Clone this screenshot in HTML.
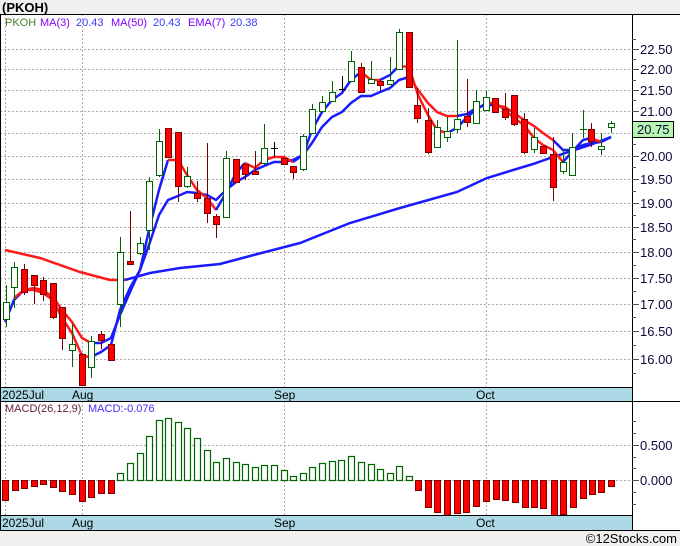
<!DOCTYPE html>
<html><head><meta charset="utf-8"><style>
html,body{margin:0;padding:0;background:#fff;}
svg{display:block;font-family:"Liberation Sans",sans-serif;}
</style></head><body>
<svg width="680" height="546" viewBox="0 0 680 546" xmlns="http://www.w3.org/2000/svg">
<rect x="0" y="0" width="680" height="546" fill="#fff"/>
<rect x="0" y="0" width="680" height="14" fill="#f0f0f0"/>
<text x="2" y="12" font-size="13" font-weight="bold" fill="#000">(PKOH)</text>
<rect x="0" y="530" width="680" height="16" fill="#f0f0f0"/>
<text x="677" y="543" font-size="13" fill="#000" text-anchor="end">©12Stocks.com</text>

<!-- grid -->
<g stroke="#aaa" stroke-width="1" stroke-dasharray="2,2">
<line x1="0" y1="49.5" x2="632" y2="49.5"/><line x1="0" y1="69.5" x2="632" y2="69.5"/>
<line x1="0" y1="90.5" x2="632" y2="90.5"/><line x1="0" y1="111.5" x2="632" y2="111.5"/>
<line x1="0" y1="133.5" x2="632" y2="133.5"/><line x1="0" y1="156.5" x2="632" y2="156.5"/>
<line x1="0" y1="179.5" x2="632" y2="179.5"/><line x1="0" y1="203.5" x2="632" y2="203.5"/>
<line x1="0" y1="227.5" x2="632" y2="227.5"/><line x1="0" y1="252.5" x2="632" y2="252.5"/>
<line x1="0" y1="278.5" x2="632" y2="278.5"/><line x1="0" y1="304.5" x2="632" y2="304.5"/>
<line x1="0" y1="331.5" x2="632" y2="331.5"/><line x1="0" y1="359.5" x2="632" y2="359.5"/>
<line x1="5.5" y1="14" x2="5.5" y2="387"/><line x1="82.5" y1="14" x2="82.5" y2="387"/>
<line x1="284.5" y1="14" x2="284.5" y2="387"/><line x1="486.5" y1="14" x2="486.5" y2="387"/>
<line x1="5.5" y1="401" x2="5.5" y2="515"/><line x1="82.5" y1="401" x2="82.5" y2="515"/>
<line x1="284.5" y1="401" x2="284.5" y2="515"/><line x1="486.5" y1="401" x2="486.5" y2="515"/>
<line x1="0" y1="445.5" x2="632" y2="445.5"/><line x1="0" y1="480.5" x2="632" y2="480.5"/>
</g>

<!-- legend -->
<text x="5" y="26" font-size="11" fill="#4b7d2a">PKOH</text>
<text x="40" y="26" font-size="11" fill="#7f00ff">MA(3)</text>
<text x="76" y="26" font-size="11" fill="#3a3aff">20.43</text>
<text x="111" y="26" font-size="11" fill="#7f00ff">MA(50)</text>
<text x="153" y="26" font-size="11" fill="#3a3aff">20.43</text>
<text x="188" y="26" font-size="11" fill="#7f00ff">EMA(7)</text>
<text x="230" y="26" font-size="11" fill="#3a3aff">20.38</text>

<!-- MA50 -->
<polyline fill="none" stroke="#ff1a1a" stroke-width="2.5" points="5,250 40,258 80,272 110,280 125,280"/>
<polyline fill="none" stroke="#1a1aff" stroke-width="2.5" points="125,280 150,273 180,268 220,264 250,256 300,243 350,223 400,208 457,192 487,178 533,164 553,157 590,145 611,137"/>

<!-- EMA7 -->
<polyline fill="none" stroke="#ff1a1a" stroke-width="2.5" points="24,290 34,288 43,290 53,297 62,310 72,322 82,338 91,343"/>
<polyline fill="none" stroke="#1a1aff" stroke-width="2.5" points="5,322 14,300 24,290"/>
<polyline fill="none" stroke="#1a1aff" stroke-width="2.5" points="91,343 101,343 111,338 120,315 130,292 140,270 149,245 159,215 168,200 178,196 187,192 197,193 207,195 216,200 226,190 236,182 245,177 255,170 264,166 274,162 284,162 293,160 303,155 312,143 322,127 332,117 342,112 351,103 361,96 371,96 380,92 390,88 399,80 409,77"/>
<polyline fill="none" stroke="#ff1a1a" stroke-width="2.5" points="409,77 418,90 428,103 437,112 447,116 457,116"/>
<polyline fill="none" stroke="#ff1a1a" stroke-width="2.5" points="495,105 505,107 514,113 524,120 534,126 543,133 553,140"/>
<polyline fill="none" stroke="#1a1aff" stroke-width="2.5" points="457,116 467,114 476,108 486,105 495,105"/>
<polyline fill="none" stroke="#1a1aff" stroke-width="2.5" points="553,140 563,150 572,150 583,145 591,143 601,142 611,137"/>

<!-- MA3 -->
<polyline fill="none" stroke="#ff1a1a" stroke-width="2.5" points="14,298 24,290 34,290 43,293 53,300 62,318 72,333 82,356 91,357"/>
<polyline fill="none" stroke="#1a1aff" stroke-width="2.5" points="91,357 101,352 111,345 120,310 130,288 140,270 149,230 159,190 168,160"/>
<polyline fill="none" stroke="#ff1a1a" stroke-width="2.5" points="168,160 178,160 187,175 197,190 207,198 216,210"/>
<polyline fill="none" stroke="#1a1aff" stroke-width="2.5" points="216,210 226,193 236,173 245,163"/>
<polyline fill="none" stroke="#ff1a1a" stroke-width="2.5" points="245,163 255,168 264,160 274,157 284,157 293,162"/>
<polyline fill="none" stroke="#1a1aff" stroke-width="2.5" points="293,162 303,155 312,130 322,112 332,100 342,93 351,80 361,72"/>
<polyline fill="none" stroke="#ff1a1a" stroke-width="2.5" points="361,72 371,80 380,80"/>
<polyline fill="none" stroke="#1a1aff" stroke-width="2.5" points="380,80 390,75 399,66"/>
<polyline fill="none" stroke="#ff1a1a" stroke-width="2.5" points="399,66 409,67 418,95 428,115 437,130 447,133"/>
<polyline fill="none" stroke="#1a1aff" stroke-width="2.5" points="447,133 457,128 467,117 476,110 486,103"/>
<polyline fill="none" stroke="#ff1a1a" stroke-width="2.5" points="486,103 495,103 505,110 514,118 524,125 534,138 543,145 553,150 563,162"/>
<polyline fill="none" stroke="#1a1aff" stroke-width="2.5" points="563,162 572,152 583,140 591,138"/>
<polyline fill="none" stroke="#ff1a1a" stroke-width="2.5" points="591,138 601,142"/>
<polyline fill="none" stroke="#1a1aff" stroke-width="2.5" points="601,142 611,137"/>

<!-- candles: green -->
<g stroke="#006400" stroke-width="1" fill="#fff">
<line x1="6.5" y1="285" x2="6.5" y2="327"/><rect x="3.5" y="302.5" width="6" height="17"/>
<line x1="14.5" y1="262" x2="14.5" y2="308"/><rect x="11.5" y="267.5" width="6" height="20"/>
<line x1="72.5" y1="324" x2="72.5" y2="367"/><rect x="69.5" y="344.5" width="6" height="6"/>
<line x1="91.5" y1="336" x2="91.5" y2="378"/><rect x="88.5" y="341.5" width="6" height="26"/>
<line x1="120.5" y1="237" x2="120.5" y2="327"/><rect x="117.5" y="252.5" width="6" height="52"/>
<line x1="140.5" y1="237" x2="140.5" y2="255"/><rect x="137.5" y="243.5" width="6" height="10"/>
<line x1="149.5" y1="177" x2="149.5" y2="250"/><rect x="146.5" y="181.5" width="6" height="49"/>
<line x1="159.5" y1="129" x2="159.5" y2="177"/><rect x="156.5" y="141.5" width="6" height="34"/>
<line x1="187.5" y1="167" x2="187.5" y2="188"/><rect x="184.5" y="176.5" width="6" height="10"/>
<line x1="226.5" y1="151" x2="226.5" y2="218"/><rect x="223.5" y="158.5" width="6" height="59"/>
<line x1="264.5" y1="124" x2="264.5" y2="165"/><rect x="261.5" y="148.5" width="6" height="15"/>
<line x1="303.5" y1="134" x2="303.5" y2="171"/><rect x="300.5" y="136.5" width="6" height="33"/>
<line x1="312.5" y1="104" x2="312.5" y2="134"/><rect x="309.5" y="109.5" width="6" height="24"/>
<line x1="322.5" y1="96" x2="322.5" y2="112"/><rect x="319.5" y="102.5" width="6" height="9"/>
<line x1="332.5" y1="81" x2="332.5" y2="102"/><rect x="329.5" y="92.5" width="6" height="9"/>
<line x1="351.5" y1="51" x2="351.5" y2="82"/><rect x="348.5" y="61.5" width="6" height="20"/>
<line x1="371.5" y1="61" x2="371.5" y2="84"/><rect x="368.5" y="79.5" width="6" height="4"/>
<line x1="390.5" y1="57" x2="390.5" y2="85"/><rect x="387.5" y="80.5" width="6" height="4"/>
<line x1="399.5" y1="29" x2="399.5" y2="70"/><rect x="396.5" y="32.5" width="6" height="37"/>
<line x1="437.5" y1="120" x2="437.5" y2="148"/><rect x="434.5" y="127.5" width="6" height="20"/>
<line x1="447.5" y1="117" x2="447.5" y2="142"/><rect x="444.5" y="131.5" width="6" height="6"/>
<line x1="457.5" y1="40" x2="457.5" y2="133"/><rect x="454.5" y="119.5" width="6" height="10"/>
<line x1="476.5" y1="90" x2="476.5" y2="124"/><rect x="473.5" y="101.5" width="6" height="22"/>
<line x1="486.5" y1="91" x2="486.5" y2="111"/><rect x="483.5" y="97.5" width="6" height="13"/>
<line x1="534.5" y1="128" x2="534.5" y2="153"/><rect x="531.5" y="137.5" width="6" height="12"/>
<line x1="563.5" y1="149" x2="563.5" y2="174"/><rect x="560.5" y="162.5" width="6" height="9"/>
<line x1="572.5" y1="133" x2="572.5" y2="176"/><rect x="569.5" y="147.5" width="6" height="28"/>
<line x1="583.5" y1="110" x2="583.5" y2="138"/><line x1="580" y1="129.5" x2="587" y2="129.5"/>
<line x1="601.5" y1="133" x2="601.5" y2="155"/><rect x="598.5" y="146.5" width="6" height="3"/>
<line x1="611.5" y1="121" x2="611.5" y2="133"/><rect x="608.5" y="123.5" width="6" height="4"/>
</g>
<g stroke="#000" stroke-width="1">
<line x1="274.5" y1="142" x2="274.5" y2="157"/><line x1="271" y1="148.5" x2="278" y2="148.5"/>
<line x1="342.5" y1="76" x2="342.5" y2="92"/><line x1="339" y1="89.5" x2="346" y2="89.5"/>
</g>
<!-- candles: red -->
<g stroke="#7a0000" stroke-width="1" fill="#ff0000">
<line x1="24.5" y1="264" x2="24.5" y2="295"/><rect x="21.5" y="269.5" width="6" height="23"/>
<line x1="34.5" y1="275" x2="34.5" y2="304"/><rect x="31.5" y="275.5" width="6" height="10"/>
<line x1="43.5" y1="277" x2="43.5" y2="301"/><rect x="40.5" y="280.5" width="6" height="14"/>
<line x1="53.5" y1="283" x2="53.5" y2="319"/><rect x="50.5" y="283.5" width="6" height="34"/>
<line x1="62.5" y1="307" x2="62.5" y2="350"/><rect x="59.5" y="307.5" width="6" height="31"/>
<line x1="82.5" y1="353" x2="82.5" y2="386"/><rect x="79.5" y="354.5" width="6" height="31"/>
<line x1="101.5" y1="331" x2="101.5" y2="349"/><rect x="98.5" y="334.5" width="6" height="6"/>
<line x1="111.5" y1="344" x2="111.5" y2="360"/><rect x="108.5" y="344.5" width="6" height="16"/>
<line x1="130.5" y1="211" x2="130.5" y2="264"/><rect x="127.5" y="261.5" width="6" height="3"/>
<line x1="168.5" y1="128" x2="168.5" y2="157"/><rect x="165.5" y="128.5" width="6" height="29"/>
<line x1="178.5" y1="132" x2="178.5" y2="202"/><rect x="175.5" y="132.5" width="6" height="54"/>
<line x1="197.5" y1="181" x2="197.5" y2="202"/><rect x="194.5" y="193.5" width="6" height="5"/>
<line x1="207.5" y1="143" x2="207.5" y2="223"/><rect x="204.5" y="198.5" width="6" height="15"/>
<line x1="216.5" y1="214" x2="216.5" y2="238"/><rect x="213.5" y="216.5" width="6" height="8"/>
<rect x="233.5" y="159.5" width="6" height="23"/>
<line x1="245.5" y1="164" x2="245.5" y2="180"/><rect x="242.5" y="164.5" width="6" height="10"/>
<line x1="255.5" y1="151" x2="255.5" y2="175"/><rect x="252.5" y="171.5" width="6" height="3"/>
<rect x="281.5" y="158.5" width="6" height="6"/>
<line x1="293.5" y1="166" x2="293.5" y2="179"/><rect x="290.5" y="166.5" width="6" height="6"/>
<line x1="361.5" y1="63" x2="361.5" y2="92"/><rect x="358.5" y="67.5" width="6" height="25"/>
<line x1="380.5" y1="79" x2="380.5" y2="91"/><rect x="377.5" y="81.5" width="6" height="4"/>
<rect x="406.5" y="32.5" width="6" height="55"/>
<line x1="417.5" y1="88" x2="417.5" y2="123"/><rect x="414.5" y="105.5" width="6" height="13"/>
<line x1="428.5" y1="108" x2="428.5" y2="154"/><rect x="425.5" y="120.5" width="6" height="32"/>
<line x1="467.5" y1="79" x2="467.5" y2="127"/><rect x="464.5" y="116.5" width="6" height="6"/>
<rect x="492.5" y="98.5" width="6" height="14"/>
<line x1="505.5" y1="93" x2="505.5" y2="120"/><rect x="502.5" y="109.5" width="6" height="8"/>
<line x1="514.5" y1="95" x2="514.5" y2="126"/><rect x="511.5" y="95.5" width="6" height="29"/>
<line x1="524.5" y1="113" x2="524.5" y2="154"/><rect x="521.5" y="119.5" width="6" height="33"/>
<rect x="540.5" y="146.5" width="6" height="7"/>
<line x1="553.5" y1="137" x2="553.5" y2="201"/><rect x="550.5" y="154.5" width="6" height="33"/>
<line x1="591.5" y1="123" x2="591.5" y2="147"/><rect x="588.5" y="129.5" width="6" height="12"/>
</g>

<!-- MACD bars green -->
<g stroke="#006400" stroke-width="1.2" fill="#fff">
<rect x="117.5" y="473.5" width="6" height="7"/><rect x="127.5" y="463.5" width="6" height="17"/>
<rect x="137.5" y="453.5" width="6" height="27"/><rect x="146.5" y="436.5" width="6" height="44"/>
<rect x="156.5" y="420.5" width="6" height="60"/><rect x="165.5" y="418.5" width="6" height="62"/>
<rect x="175.5" y="422.5" width="6" height="58"/><rect x="184.5" y="428.5" width="6" height="52"/>
<rect x="194.5" y="438.5" width="6" height="42"/><rect x="204.5" y="450.5" width="6" height="30"/>
<rect x="213.5" y="462.5" width="6" height="18"/><rect x="223.5" y="458.5" width="6" height="22"/>
<rect x="233.5" y="462.5" width="6" height="18"/><rect x="242.5" y="464.5" width="6" height="16"/>
<rect x="252.5" y="467.5" width="6" height="13"/><rect x="261.5" y="465.5" width="6" height="15"/>
<rect x="271.5" y="465.5" width="6" height="15"/><rect x="281.5" y="470.5" width="6" height="10"/>
<rect x="290.5" y="476.5" width="6" height="4"/><rect x="300.5" y="473.5" width="6" height="7"/>
<rect x="309.5" y="467.5" width="6" height="13"/><rect x="319.5" y="463.5" width="6" height="17"/>
<rect x="329.5" y="461.5" width="6" height="19"/><rect x="338.5" y="460.5" width="6" height="20"/>
<rect x="348.5" y="456.5" width="6" height="24"/><rect x="358.5" y="462.5" width="6" height="18"/>
<rect x="368.5" y="464.5" width="6" height="16"/><rect x="377.5" y="469.5" width="6" height="11"/>
<rect x="387.5" y="473.5" width="6" height="7"/><rect x="396.5" y="466.5" width="6" height="14"/>
<rect x="406.5" y="476.5" width="6" height="4"/>
</g>
<g stroke="#7a0000" stroke-width="1" fill="#ff0000">
<rect x="2.5" y="480.5" width="6" height="20"/><rect x="12.5" y="480.5" width="6" height="10"/>
<rect x="21.5" y="480.5" width="6" height="8"/><rect x="31.5" y="480.5" width="6" height="6"/>
<rect x="40.5" y="480.5" width="6" height="4"/><rect x="50.5" y="480.5" width="6" height="7"/>
<rect x="59.5" y="480.5" width="6" height="11"/><rect x="69.5" y="480.5" width="6" height="14"/>
<rect x="79.5" y="480.5" width="6" height="21"/><rect x="88.5" y="480.5" width="6" height="17"/>
<rect x="98.5" y="480.5" width="6" height="13"/><rect x="108.5" y="480.5" width="6" height="13"/>
<rect x="415.5" y="480.5" width="6" height="10"/><rect x="425.5" y="480.5" width="6" height="27"/>
<rect x="434.5" y="480.5" width="6" height="32"/><rect x="444.5" y="480.5" width="6" height="35"/>
<rect x="454.5" y="480.5" width="6" height="33"/><rect x="463.5" y="480.5" width="6" height="32"/>
<rect x="473.5" y="480.5" width="6" height="26"/><rect x="483.5" y="480.5" width="6" height="21"/>
<rect x="493.5" y="480.5" width="6" height="19"/><rect x="502.5" y="480.5" width="6" height="20"/>
<rect x="512.5" y="480.5" width="6" height="22"/><rect x="522.5" y="480.5" width="6" height="27"/>
<rect x="531.5" y="480.5" width="6" height="27"/><rect x="540.5" y="480.5" width="6" height="28"/>
<rect x="551.5" y="480.5" width="6" height="35"/><rect x="560.5" y="480.5" width="6" height="34"/>
<rect x="570.5" y="480.5" width="6" height="27"/><rect x="580.5" y="480.5" width="6" height="18"/>
<rect x="589.5" y="480.5" width="6" height="14"/><rect x="598.5" y="480.5" width="6" height="12"/>
<rect x="608.5" y="480.5" width="6" height="6"/>
</g>
<text x="5" y="412" font-size="11" fill="#6a1a3a">MACD(26,12,9)</text>
<text x="88" y="412" font-size="11" fill="#4a2aff">MACD:-0.076</text>

<!-- bands -->
<rect x="0" y="387" width="632" height="14" fill="#add8e6"/>
<rect x="0" y="515" width="632" height="15" fill="#add8e6"/>
<g font-size="12" fill="#000">
<text x="2" y="399">2025Jul</text><text x="72" y="399">Aug</text><text x="274" y="399">Sep</text><text x="476" y="399">Oct</text>
<text x="2" y="527">2025Jul</text><text x="72" y="527">Aug</text><text x="274" y="527">Sep</text><text x="476" y="527">Oct</text>
</g>

<!-- borders -->
<g stroke="#000" stroke-width="1">
<line x1="0" y1="14.5" x2="680" y2="14.5"/>
<line x1="0.5" y1="14" x2="0.5" y2="530"/>
<line x1="632.5" y1="14" x2="632.5" y2="530"/>
<line x1="0" y1="387.5" x2="632" y2="387.5"/>
<line x1="0" y1="401.5" x2="680" y2="401.5"/>
<line x1="0" y1="515.5" x2="632" y2="515.5"/>
<line x1="0" y1="530.5" x2="680" y2="530.5"/>
</g>
<!-- right axis ticks -->
<g stroke="#555" stroke-width="1">
<line x1="632" y1="49.5" x2="639" y2="49.5"/><line x1="632" y1="69.5" x2="639" y2="69.5"/>
<line x1="632" y1="90.5" x2="639" y2="90.5"/><line x1="632" y1="111.5" x2="639" y2="111.5"/>
<line x1="632" y1="156.5" x2="639" y2="156.5"/>
<line x1="632" y1="179.5" x2="639" y2="179.5"/><line x1="632" y1="203.5" x2="639" y2="203.5"/>
<line x1="632" y1="227.5" x2="639" y2="227.5"/><line x1="632" y1="252.5" x2="639" y2="252.5"/>
<line x1="632" y1="278.5" x2="639" y2="278.5"/><line x1="632" y1="304.5" x2="639" y2="304.5"/>
<line x1="632" y1="331.5" x2="639" y2="331.5"/><line x1="632" y1="359.5" x2="639" y2="359.5"/>
<line x1="632" y1="39.5" x2="636" y2="39.5"/><line x1="632" y1="59.5" x2="636" y2="59.5"/>
<line x1="632" y1="80.5" x2="636" y2="80.5"/><line x1="632" y1="100.5" x2="636" y2="100.5"/>
<line x1="632" y1="144.5" x2="636" y2="144.5"/><line x1="632" y1="167.5" x2="636" y2="167.5"/>
<line x1="632" y1="191.5" x2="636" y2="191.5"/><line x1="632" y1="215.5" x2="636" y2="215.5"/>
<line x1="632" y1="239.5" x2="636" y2="239.5"/><line x1="632" y1="265.5" x2="636" y2="265.5"/>
<line x1="632" y1="291.5" x2="636" y2="291.5"/><line x1="632" y1="317.5" x2="636" y2="317.5"/>
<line x1="632" y1="345.5" x2="636" y2="345.5"/><line x1="632" y1="373.5" x2="636" y2="373.5"/>
<line x1="632" y1="445.5" x2="639" y2="445.5"/><line x1="632" y1="480.5" x2="639" y2="480.5"/>
<line x1="632" y1="421.5" x2="636" y2="421.5"/><line x1="632" y1="433.5" x2="636" y2="433.5"/>
<line x1="632" y1="457.5" x2="636" y2="457.5"/><line x1="632" y1="468.5" x2="636" y2="468.5"/>
<line x1="632" y1="492.5" x2="636" y2="492.5"/><line x1="632" y1="504.5" x2="636" y2="504.5"/>
</g>
<g font-size="13" fill="#0a0a3a">
<text x="640" y="54">22.50</text><text x="640" y="74">22.00</text><text x="640" y="95">21.50</text>
<text x="640" y="116">21.00</text><text x="640" y="161">20.00</text><text x="640" y="184">19.50</text>
<text x="640" y="208">19.00</text><text x="640" y="232">18.50</text><text x="640" y="257">18.00</text>
<text x="640" y="283">17.50</text><text x="640" y="309">17.00</text><text x="640" y="336">16.50</text>
<text x="640" y="364">16.00</text>
<text x="640" y="450">0.500</text><text x="640" y="485">0.000</text>
</g>
<rect x="632.5" y="121.5" width="41" height="16" fill="#b8f5b0" stroke="#000"/>
<text x="637" y="134" font-size="13" fill="#0a0a3a">20.75</text>
</svg>
</body></html>
